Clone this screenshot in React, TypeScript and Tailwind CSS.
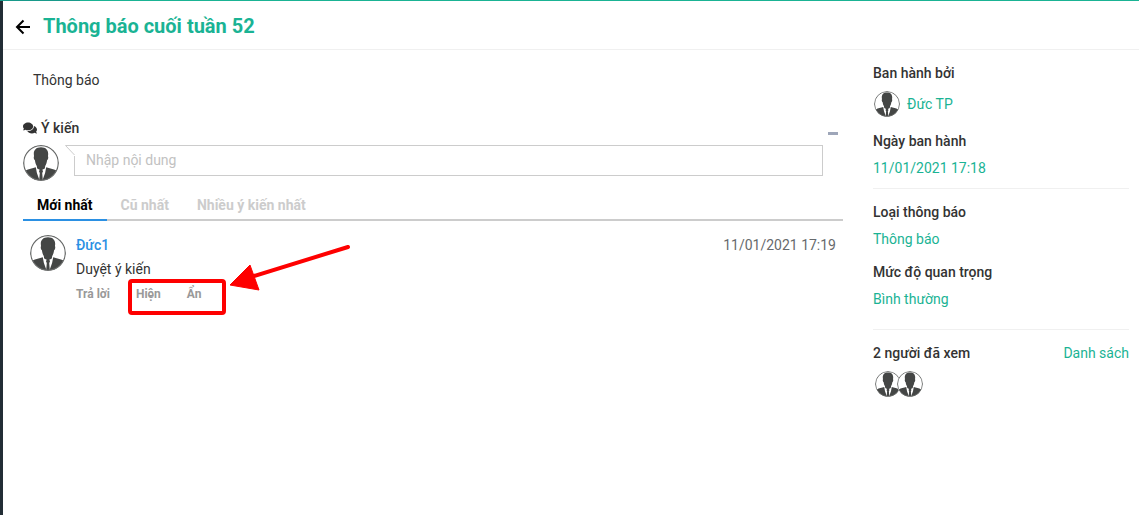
import React, { useState } from 'react';
import { FaComments } from 'react-icons/fa';

interface AvatarProps {
    className: string;
}

interface Detail {
    label: string;
    value: string;
}

const SORT_TABS = [
    { key: 'newest', label: 'Mới nhất' },
    { key: 'oldest', label: 'Cũ nhất' },
    { key: 'popular', label: 'Nhiều ý kiến nhất' }
];

const DETAILS: Detail[] = [
    { label: 'Loại thông báo', value: 'Thông báo' },
    { label: 'Mức độ quan trọng', value: 'Bình thường' }
];

const Avatar: React.FC<AvatarProps> = ({ className }) => (
    <svg viewBox="0 0 36 36" className={`block shrink-0 rounded-full bg-white ${className}`} aria-hidden="true">
        <path
            d="M18 2.200C13 2.200 10.800 5 10.800 9C10.800 10 11.100 10.600 11 11.300C10.400 12.300 10.900 14.800 11.900 15.300C12.300 18 12.800 19.600 13.800 21L14.200 23.500L18 25.500L21.800 23.500L22.200 21C23.200 19.600 23.700 18 24.100 15.300C25.100 14.800 25.600 12.300 25 11.300C24.900 10.600 25.200 10 25.200 9C25.200 5 23 2.200 18 2.200Z"
            fill="#444645"
        />
        <path
            d="M2.600 25.500C5.500 23.800 9.600 23.600 12.800 22.300L13.900 28L16.600 35.500C10 34.800 5 31.200 2.600 25.500ZM33.400 25.500C30.500 23.800 26.400 23.600 23.200 22.300L22.100 28L19.400 35.500C26 34.800 31 31.200 33.400 25.500Z"
            fill="#444645"
        />
        <path d="M16.500 25H19.500L20 26.500L19.200 28L19.800 35H16.200L16.800 28L16 26.500Z" fill="#444645" />
        <circle cx="18" cy="18" r="17.300" fill="none" stroke="#6b6d6c" strokeWidth="1.300" />
    </svg>
);

const Sidebar: React.FC = () => (
    <aside className="w-64 shrink-0 pt-[13px] leading-5">
        <section className="border-b border-[#f0f0f0] pb-2.5">
            <h2 className="font-medium">Ban hành bởi</h2>
            <div className="mt-2 mb-3.5 flex items-center gap-[7px]">
                <Avatar className="ml-px h-[26px] w-[26px]" />
                <a href="#" className="text-[#1ab394]">Đức TP</a>
            </div>
            <h2 className="font-medium">Ngày ban hành</h2>
            <p className="mt-[7px] text-[#1ab394]">11/01/2021 17:18</p>
        </section>

        <section className="space-y-[13px] border-b border-[#f0f0f0] pt-[13px] pb-5">
            {DETAILS.map((detail) => (
                <div key={detail.label}>
                    <h2 className="font-medium">{detail.label}</h2>
                    <p className="mt-[7px] text-[#1ab394]">{detail.value}</p>
                </div>
            ))}
        </section>

        <section className="pt-[13px]">
            <div className="flex justify-between">
                <h2 className="font-medium">2 người đã xem</h2>
                <a href="#" className="text-[#1ab394]">Danh sách</a>
            </div>
            <div className="mt-2 ml-0.5 flex -space-x-1">
                <Avatar className="h-[26px] w-[26px]" />
                <Avatar className="h-[26px] w-[26px]" />
            </div>
        </section>
    </aside>
);

const Comment: React.FC = () => (
    <article className="relative flex gap-2.5 px-[7px] pt-3.5">
        <Avatar className="h-9 w-9" />
        <div className="min-w-0 flex-1">
            <div className="flex justify-between leading-5">
                <a href="#" className="font-medium text-[#2b90e3]">Đức1</a>
                <time className="text-[#676a6c]">11/01/2021 17:19</time>
            </div>
            <p className="mt-1 leading-5">Duyệt ý kiến</p>
            <div className="mt-[7px] flex gap-[26px] text-xs leading-4 font-bold text-[#999]">
                <button type="button">Trả lời</button>
                <button type="button">Hiện</button>
                <button type="button">Ẩn</button>
            </div>
        </div>

        {/* highlight around the show / hide actions */}
        <div className="pointer-events-none absolute top-[58px] left-[105px] h-9 w-[98px] rounded-sm border-4 border-[#fe0000]" />
        <svg viewBox="0 0 124 52" className="pointer-events-none absolute top-[21px] left-[205px] h-[52px] w-[124px]" aria-hidden="true">
            <path d="M120 5L26 34" stroke="#fe0000" strokeWidth="4" strokeLinecap="round" />
            <path d="M2 43L22 23L31 48Z" fill="#fe0000" stroke="#fe0000" strokeWidth="1" strokeLinejoin="round" />
        </svg>
    </article>
);

const App: React.FC = () => {
    const [sort, setSort] = useState('newest');
    const [content, setContent] = useState('');
    const [isOpen, setIsOpen] = useState(true);

    return (
        <div className="flex min-h-screen flex-col bg-white font-[Roboto,sans-serif] text-sm text-[#333]">
            <div className="h-px bg-[#1ab394]">
                <div className="h-px w-20 bg-[#18998a]" />
            </div>
            <div className="flex-1 border-l-3 border-[#222d35]">
                <header className="flex h-[49px] items-center gap-3 border-b border-[#f0f0f0] px-3 pt-0.5">
                    <button type="button" aria-label="Quay lại" className="mt-0.5">
                        <svg viewBox="0 0 16 16" className="h-4 w-4" fill="none" stroke="#000" strokeWidth="2">
                            <path d="M15 8H2.500M8.500 1.500L2 8l6.500 6.500" />
                        </svg>
                    </button>
                    <h1 className="text-xl font-bold text-[#1ab394]">Thông báo cuối tuần 52</h1>
                </header>

                <div className="flex gap-[30px] pr-2.5 pl-5">
                    <main className="min-w-0 flex-1 pt-5">
                        <p className="px-2.5 leading-5">Thông báo</p>

                        <div className="mt-7 flex items-center justify-between leading-5">
                            <label htmlFor="comment" className="flex items-center gap-1 font-medium">
                                <FaComments className="h-3.5 w-3.5" />
                                Ý kiến
                            </label>
                            <button
                                type="button"
                                aria-label="Thu gọn"
                                onClick={() => setIsOpen(!isOpen)}
                                className="flex h-5 items-end px-[5px] pb-[3px]"
                            >
                                <span className="block h-[3px] w-2.5 bg-[#9ea6b9]" />
                            </button>
                        </div>

                        {isOpen && (
                            <>
                                <div className="mt-[7px] flex pr-5">
                                    <Avatar className="h-9 w-9" />
                                    <div className="relative ml-[15px] h-[31px] flex-1">
                                        <input
                                            id="comment"
                                            value={content}
                                            onChange={(e) => setContent(e.target.value)}
                                            placeholder="Nhập nội dung"
                                            className="h-[31px] w-full border border-[#ccc] px-[11px] pb-0.5 outline-none placeholder:text-[#c2c2c2]"
                                        />
                                        {/* speech bubble tail */}
                                        <svg viewBox="0 0 11 11" className="absolute top-0 -left-[9px] h-[11px] w-[11px]" aria-hidden="true">
                                            <path d="M0 0H11V11H9Z" fill="#fff" />
                                            <path d="M11 .5H.5L9.500 10" fill="none" stroke="#ccc" />
                                        </svg>
                                    </div>
                                </div>

                                <div role="tablist" className="mt-2 flex border-b-2 border-[#ccc]">
                                    {SORT_TABS.map((tab) => (
                                        <button
                                            key={tab.key}
                                            type="button"
                                            role="tab"
                                            aria-selected={sort === tab.key}
                                            onClick={() => setSort(tab.key)}
                                            className={`-mb-0.5 h-8 border-b-2 px-3.5 pt-0.5 font-bold ${sort === tab.key ? 'border-[#2b90e3] text-black' : 'border-transparent text-[#ccc]'}`}
                                        >
                                            {tab.label}
                                        </button>
                                    ))}
                                </div>

                                <Comment />
                            </>
                        )}
                    </main>

                    <Sidebar />
                </div>
            </div>
        </div>
    );
};

export default App;
